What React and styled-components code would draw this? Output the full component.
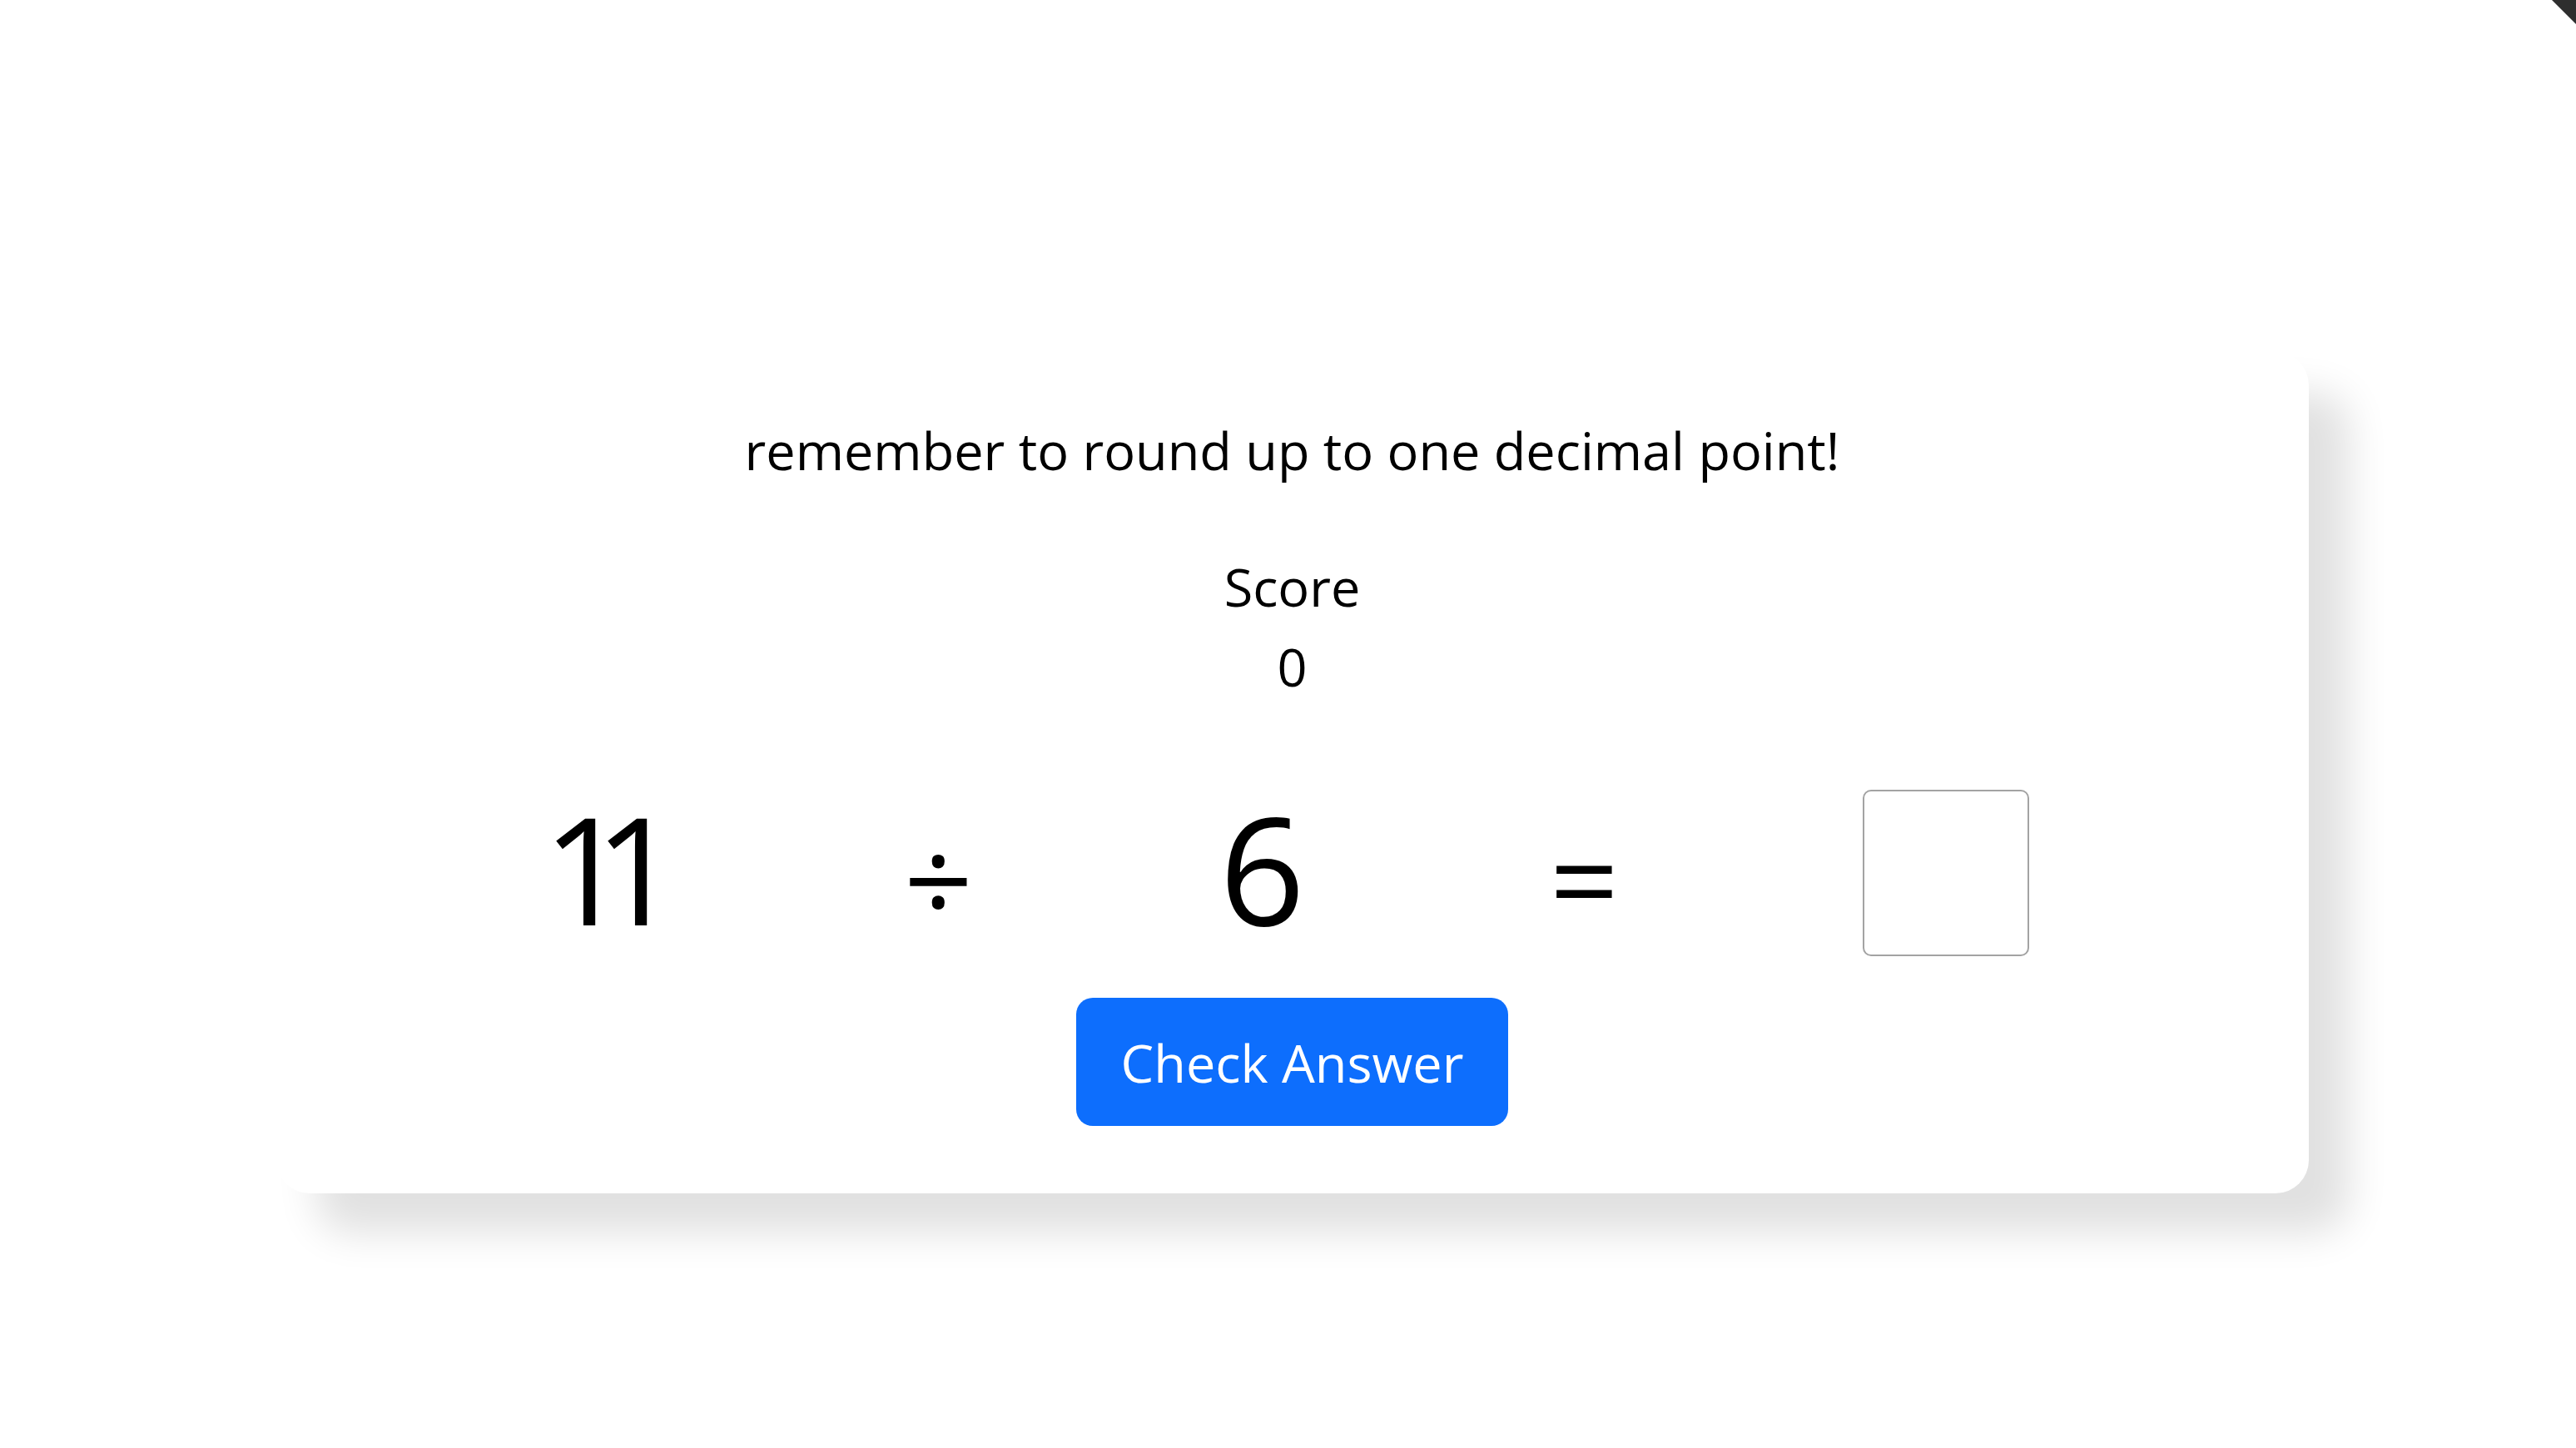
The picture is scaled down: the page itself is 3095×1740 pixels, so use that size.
import React, { useState } from 'react';
import styled, { createGlobalStyle } from 'styled-components';

const GlobalStyle = createGlobalStyle`
  html, body {
    margin: 0;
    background: #fff;
  }
  body {
    font-family: "Open Sans", "Noto Sans", sans-serif;
    color: #000;
  }
`;

export default function App() {
  const [answer, setAnswer] = useState('');

  return (
    <>
      <GlobalStyle />
      <Corner />
      <Page>
        <Card>
          <Prompt>remember to round up to one decimal point!</Prompt>
          <ScoreLabel>Score</ScoreLabel>
          <ScoreValue>0</ScoreValue>
          <Equation>
            <Term width={124} tracking={-41} indent={-30}>11</Term>
            <Operator width={73}>÷</Operator>
            <Term width={105}>6</Term>
            <Operator width={69}>=</Operator>
            <AnswerBox
              type="text"
              value={answer}
              onChange={(e) => setAnswer(e.target.value)}
            />
          </Equation>
          <CheckButton>Check Answer</CheckButton>
        </Card>
      </Page>
    </>
  );
}

const Corner = styled.div`
  position: fixed;
  top: 0;
  right: 0;
  width: 29px;
  height: 29px;
  background: #2e2e2e;
  clip-path: polygon(0 0, 100% 0, 100% 100%);
`;

const Page = styled.div`
  min-height: 1740px;
  padding: 423px 0 0 10px;
  box-sizing: border-box;
`;

const Card = styled.div`
  width: 2442px;
  margin: 0 auto;
  padding: 70px 0 81px;
  box-sizing: border-box;
  background: #fff;
  border-radius: 40px;
  box-shadow: 48px 48px 48px rgba(0, 0, 0, 0.12);
  display: flex;
  flex-direction: column;
  align-items: center;
`;

const Prompt = styled.p`
  margin: 0;
  font-size: 63px;
  line-height: 96px;
`;

const ScoreLabel = styled.div`
  margin-top: 68px;
  font-size: 63px;
  line-height: 96px;
`;

const ScoreValue = styled.div`
  font-size: 63px;
  line-height: 96px;
`;

const Equation = styled.div`
  margin-top: 100px;
  height: 200px;
  display: flex;
  align-items: center;
  gap: 300px;
`;

const Term = styled.span`
  width: ${({ width }) => width}px;
  display: flex;
  justify-content: center;
  margin-bottom: 12px;
  font-size: 180px;
  line-height: 200px;
  letter-spacing: ${({ tracking = 0 }) => tracking}px;
  text-indent: ${({ indent = 0 }) => indent}px;
  white-space: nowrap;
`;

const Operator = styled(Term)`
  margin: 12px 0 0;
  font-size: 145px;
`;

const AnswerBox = styled.input`
  width: 200px;
  height: 200px;
  box-sizing: border-box;
  border: 2px solid #a3a3a3;
  border-radius: 10px;
  font-family: inherit;
  font-size: 110px;
  text-align: center;
  outline: none;
  background: #fff;
`;

const CheckButton = styled.button`
  margin-top: 50px;
  height: 154px;
  padding: 0 54px;
  border: none;
  border-radius: 20px;
  background: #0d6efd;
  color: #fff;
  font-family: inherit;
  font-size: 63px;
  cursor: pointer;
`;
